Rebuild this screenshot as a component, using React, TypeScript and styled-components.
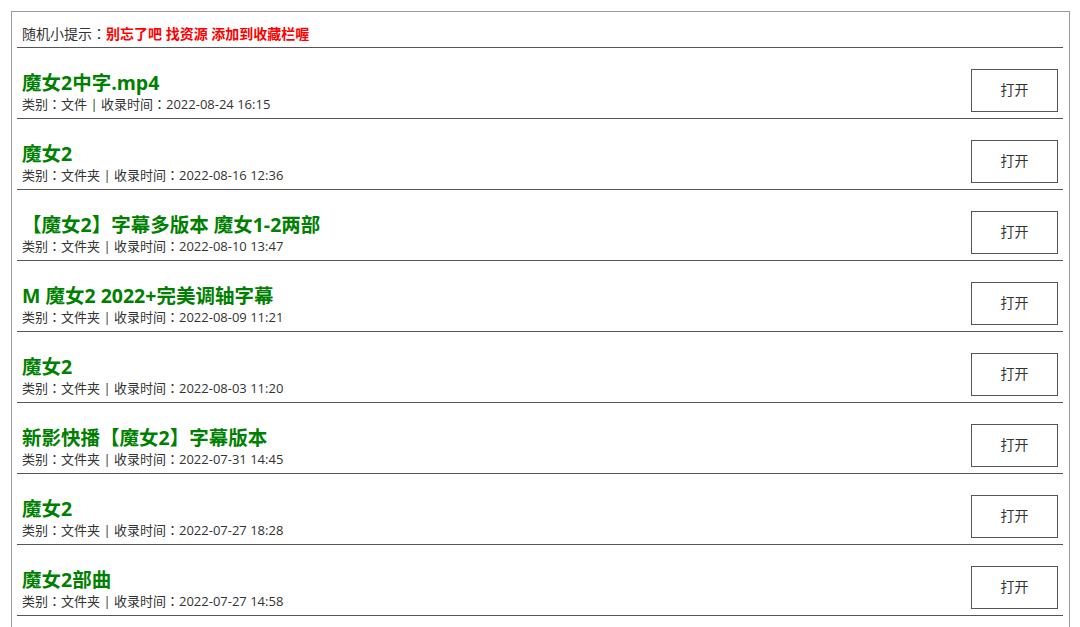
import React from "react";
import styled, { createGlobalStyle } from "styled-components";

type Item = {
  title: string;
  kind: string;
  time: string;
};

const items: Item[] = [
  { title: "魔女2中字.mp4", kind: "文件", time: "2022-08-24 16:15" },
  { title: "魔女2", kind: "文件夹", time: "2022-08-16 12:36" },
  { title: "【魔女2】字幕多版本 魔女1-2两部", kind: "文件夹", time: "2022-08-10 13:47" },
  { title: "M 魔女2 2022+完美调轴字幕", kind: "文件夹", time: "2022-08-09 11:21" },
  { title: "魔女2", kind: "文件夹", time: "2022-08-03 11:20" },
  { title: "新影快播【魔女2】字幕版本", kind: "文件夹", time: "2022-07-31 14:45" },
  { title: "魔女2", kind: "文件夹", time: "2022-07-27 18:28" },
  { title: "魔女2部曲", kind: "文件夹", time: "2022-07-27 14:58" },
];

const App: React.FC = () => {
  return (
    <>
      <GlobalStyle />
      <Frame>
        <TipBar>
          随机小提示<Colon>：</Colon>
          <TipText>别忘了吧 找资源 添加到收藏栏喔</TipText>
        </TipBar>

        <List>
          {items.map((item, i) => (
            <Row key={i}>
              <Info>
                <Title>{item.title}</Title>
                <Meta>
                  类别<Colon>：</Colon>
                  {item.kind} | 收录时间<Colon>：</Colon>
                  {item.time}
                </Meta>
              </Info>
              <OpenButton>打开</OpenButton>
            </Row>
          ))}
        </List>
      </Frame>
    </>
  );
};

export default App;

const GlobalStyle = createGlobalStyle`
  body {
    margin: 0;
    background: #fff;
    font-family: "Open Sans", "Noto Sans CJK SC", sans-serif;
    color: #333;
  }
`;

const Frame = styled.div`
  margin: 11px 10px 0 11px;
  border: 1px solid #9a9a9a;
  padding: 0 6px 30px 5px;
`;

const TipBar = styled.div`
  height: 22px;
  padding: 10px 5px 3px;
  font-size: 14px;
  line-height: 22px;
  color: #333;
  border-bottom: 1px solid #555;
`;

// centred full-width colon, as the reference renders it
const Colon = styled.span`
  font-family: "Noto Sans CJK TC", sans-serif;
`;

const TipText = styled.span`
  color: #ff0000;
  font-weight: bold;
`;

const List = styled.ul`
  list-style: none;
  margin: 0;
  padding: 0;
`;

const Row = styled.li`
  display: flex;
  align-items: flex-end;
  justify-content: space-between;
  height: 70px;
  box-sizing: content-box;
  padding: 0 5px;
  border-bottom: 1px solid #555;
`;

const Info = styled.div`
  display: flex;
  flex-direction: column;
  margin-bottom: 6px;
`;

const Title = styled.div`
  font-size: 19.5px;
  line-height: 24px;
  font-weight: bold;
  color: #008000;
`;

const Meta = styled.div`
  height: 17px;
  font-size: 13px;
  line-height: 17px;
  color: #333;
`;

const OpenButton = styled.button`
  width: 87px;
  height: 43px;
  margin-bottom: 6px;
  padding: 0 0 3px;
  background: #fff;
  border: 1px solid #555;
  font-family: "Noto Sans CJK SC", sans-serif;
  font-size: 14px;
  color: #333;
  cursor: pointer;
`;
